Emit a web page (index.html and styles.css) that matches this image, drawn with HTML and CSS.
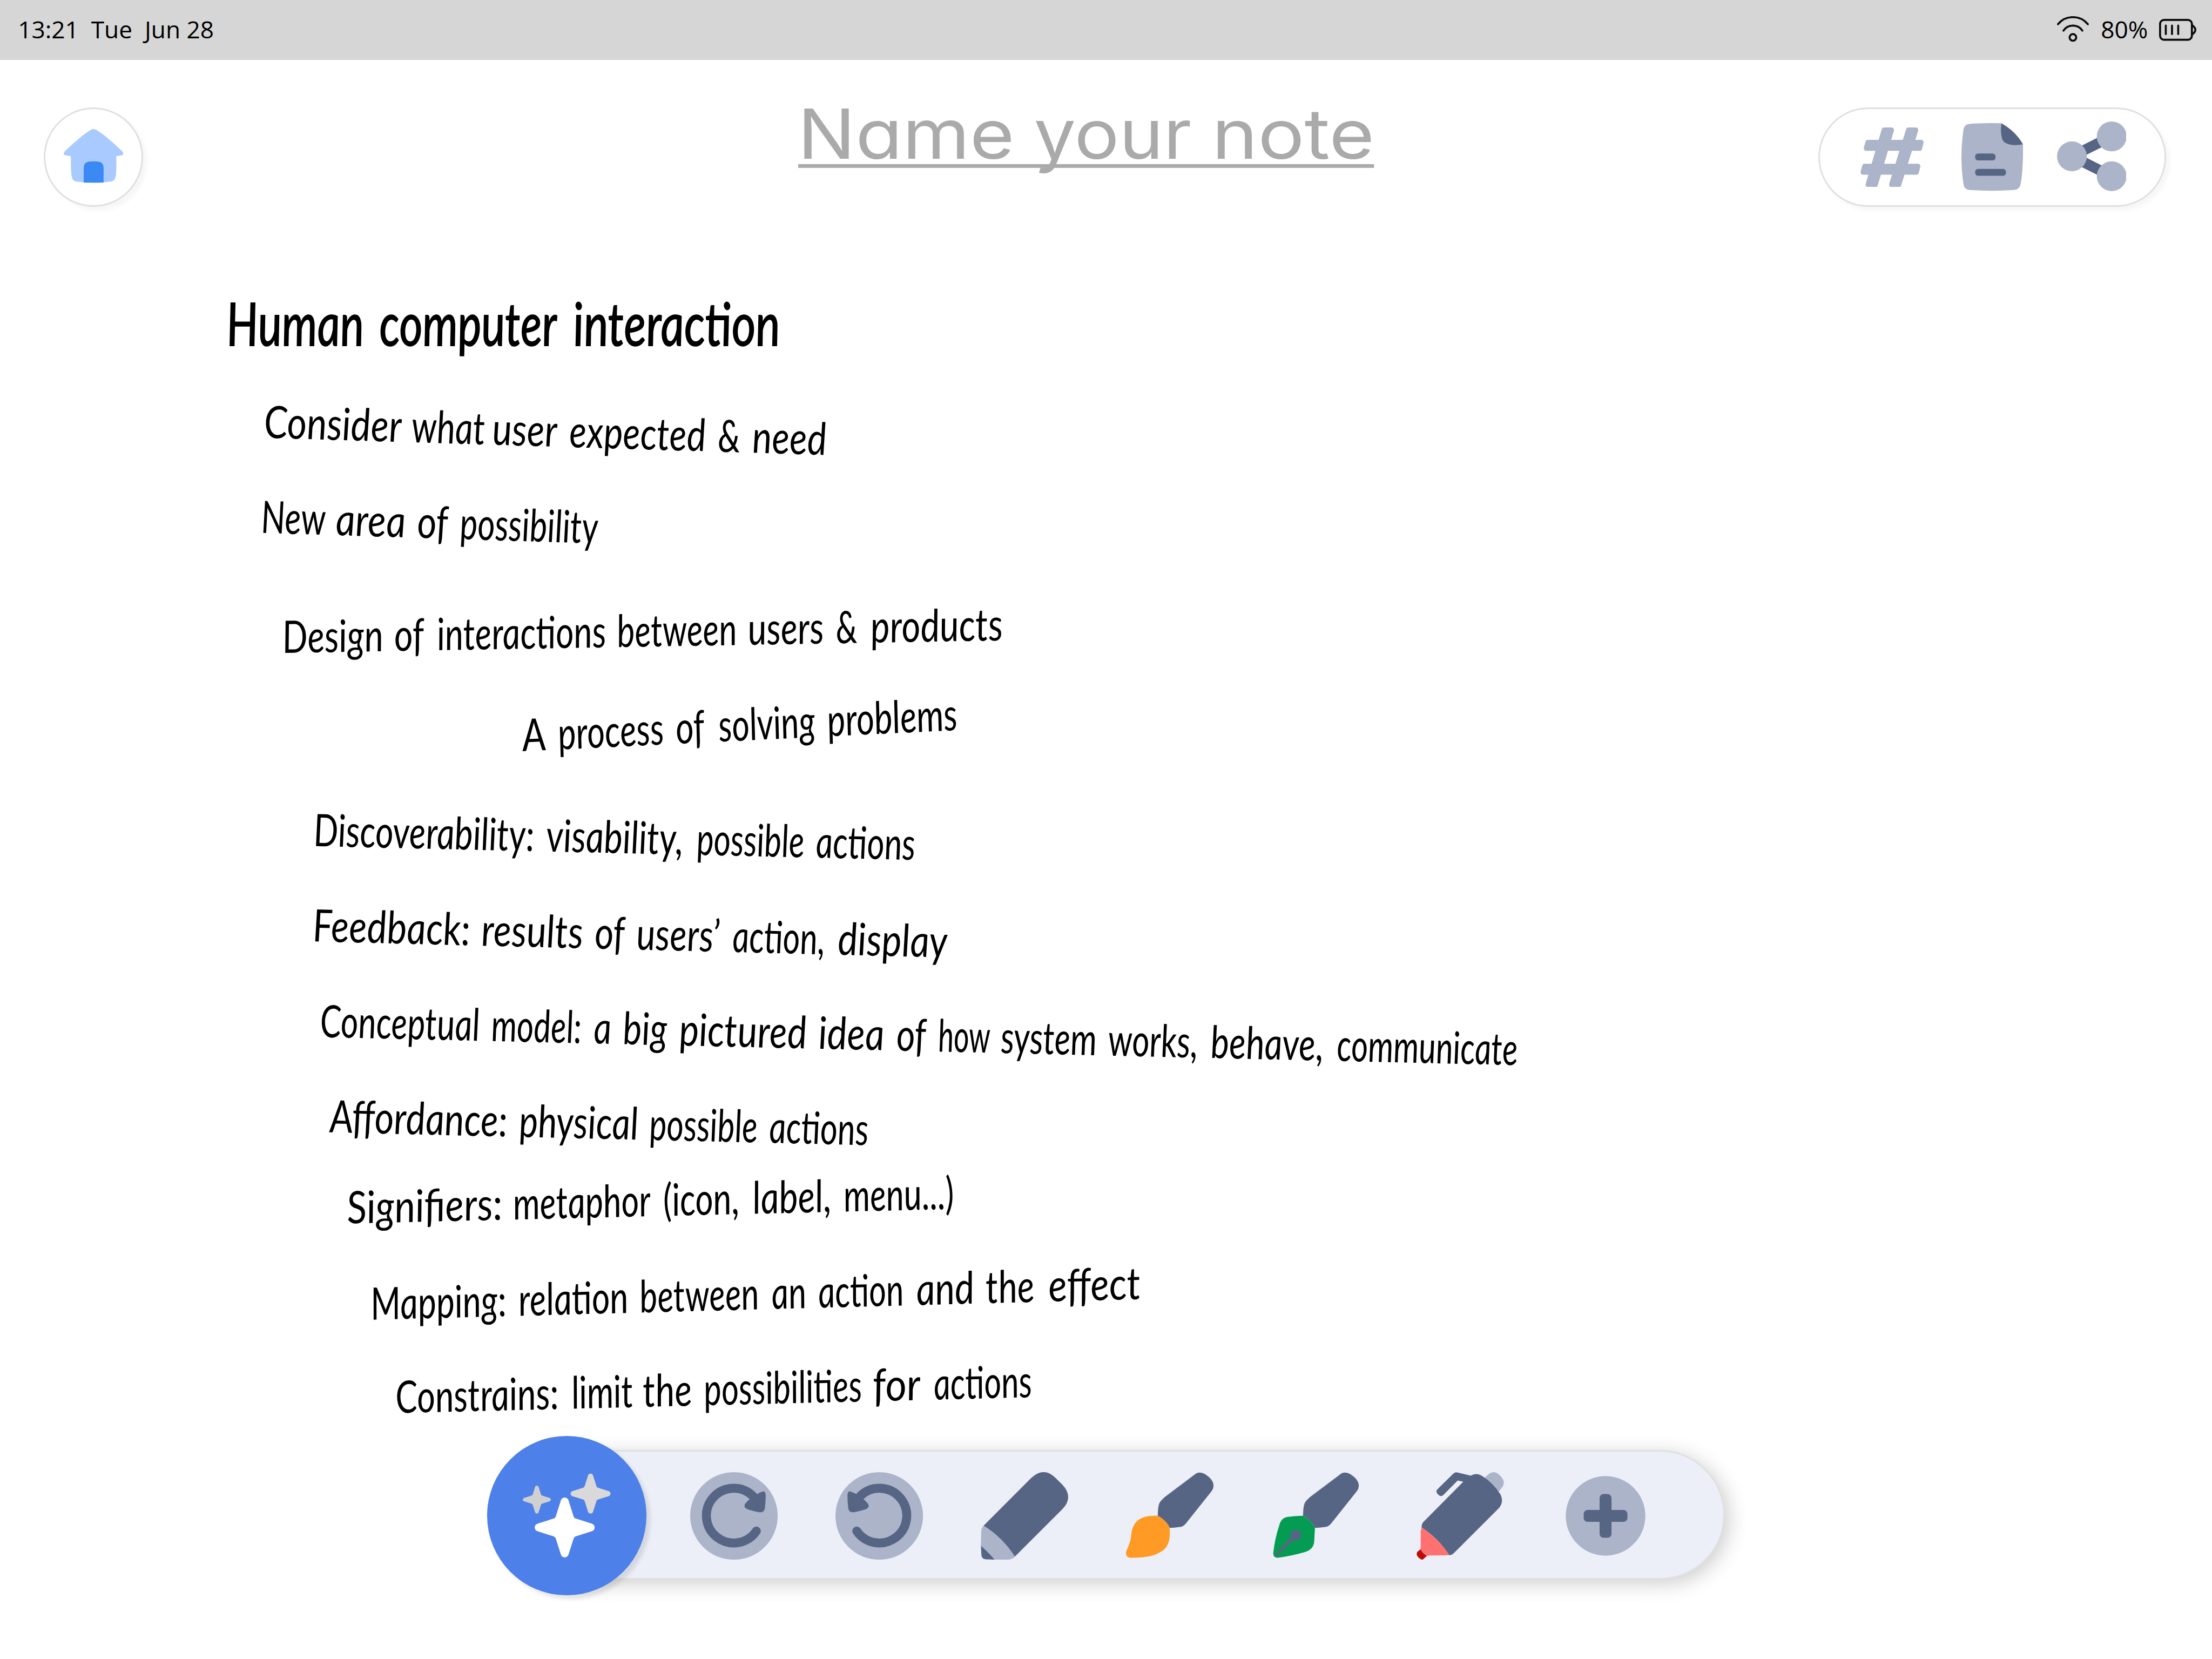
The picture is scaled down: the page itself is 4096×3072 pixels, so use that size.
FILE: index.html
```html
<!DOCTYPE html>
<html lang="en">
<head>
<meta charset="utf-8">
<title>Note</title>
<link rel="stylesheet" href="styles.css">
</head>
<body>
<div class="status">
  <span class="clock">13:21  Tue  Jun 28</span>
  <div class="indicators">
    <svg class="wifi" viewBox="0 0 64 52"><path d="M2 16A39 39 0 0 1 62 16M13 29A23 23 0 0 1 51 29"/><circle cx="32" cy="42.7" r="6.7"/></svg>
    <span class="percent">80%</span>
    <svg class="battery" viewBox="0 0 80 44"><rect x="2" y="2" width="64" height="40" rx="8"/><path d="M67 13Q79 22 67 31M13.5 13.5v17M26 13.5v17M38.5 13.5v17"/></svg>
  </div>
</div>

<header class="header">
  <button class="home" aria-label="Home">
    <svg viewBox="0 0 120 108">
      <path fill="#a8caff" d="M54 2Q60-2 66 2C84 13 101 29 117 44C122 49 120 53 115 53L105.6 54.5C106 70 106 86 104.500 95Q103 104 95 105.500Q60 110 25 105.500Q17 104 16 95C14.400 86 14.400 70 14.400 54.500L5 53C0 53-2 49 3 44C19 29 36 13 54 2Z"/>
      <path fill="#3b89f3" d="M40.200 107.400V78Q40.500 66.500 51 65.400Q60 64.600 69 65.400Q80 66.500 80.200 78V107.400Q60 108.400 40.200 107.400Z"/>
    </svg>
  </button>
  <svg class="title" viewBox="0 0 1160 160">
    <text x="-1" y="108" textLength="436" lengthAdjust="spacingAndGlyphs">Name</text>
    <text x="474" y="108" textLength="317" lengthAdjust="spacingAndGlyphs">your</text>
    <text x="832" y="108" textLength="327" lengthAdjust="spacingAndGlyphs">note</text>
    <rect x="0" y="118.300" width="1158" height="7.500"/>
  </svg>
  <div class="actions">
    <svg class="hash" viewBox="0 0 127 120"><path d="M47.700 5H62.500L30 115H15.400ZM96.700 5H111.300L77.200 115H62.600ZM15 30H122L119 42H11.700ZM8.500 78H115.500L112.500 90H5.200Z"/></svg>
    <svg class="doc" viewBox="0 0 124 136">
      <path fill="#acb4ca" d="M80.600.2Q40-.6 16 1.500Q6 3 4.500 11Q-4.500 68 4.500 125Q6 133 16 134.500Q62 137.500 106 134.500Q117 133 119 123Q124.500 95 123.800 42.700Z"/>
      <path fill="#576584" d="M80.600.2Q110 17 123.800 42.700Q104 46 94 42Q84 39 82 32Q77.500 16 80.600.2Z"/>
      <rect fill="#576584" x="27.600" y="61" width="41" height="14" rx="6"/>
      <rect fill="#576584" x="27.600" y="92" width="62" height="14" rx="6"/>
    </svg>
    <svg class="share" viewBox="0 0 140 140">
      <path fill="none" stroke="#576584" stroke-width="21" d="M110 30L30 70L110 110"/>
      <g fill="#acb4ca"><circle cx="30" cy="70" r="30"/><circle cx="110" cy="30" r="30"/><circle cx="110" cy="110" r="30"/></g>
    </svg>
  </div>
</header>

<svg class="ink" viewBox="0 412 4448 2472">
  <g class="heading">
    <text x="458" y="691" textLength="276" lengthAdjust="spacingAndGlyphs">Human</text><text x="765" y="691" textLength="358" lengthAdjust="spacingAndGlyphs">computer</text><text x="1155" y="691" textLength="416" lengthAdjust="spacingAndGlyphs">interaction</text>
  </g>
  <g transform="rotate(1.75 615 879)">
    <text x="532" y="879" textLength="277" lengthAdjust="spacingAndGlyphs">Consider</text><text x="829" y="879" textLength="148" lengthAdjust="spacingAndGlyphs">what</text><text x="991" y="879" textLength="131" lengthAdjust="spacingAndGlyphs">user</text><text x="1146" y="879" textLength="275" lengthAdjust="spacingAndGlyphs">expected</text><text x="1445" y="879" textLength="45" lengthAdjust="spacingAndGlyphs">&amp;</text><text x="1514" y="879" textLength="150" lengthAdjust="spacingAndGlyphs">need</text>
  </g>
  <g transform="rotate(1.8 600 1070)">
    <text x="526" y="1070" textLength="130" lengthAdjust="spacingAndGlyphs">New</text><text x="676" y="1070" textLength="141" lengthAdjust="spacingAndGlyphs">area</text><text x="840" y="1070" textLength="62" lengthAdjust="spacingAndGlyphs">of</text><text x="926" y="1070" textLength="278" lengthAdjust="spacingAndGlyphs">possibility</text>
  </g>
  <g transform="rotate(-1 633 1308)">
    <text x="570" y="1308" textLength="203" lengthAdjust="spacingAndGlyphs">Design</text><text x="795" y="1308" textLength="60" lengthAdjust="spacingAndGlyphs">of</text><text x="881" y="1308" textLength="340" lengthAdjust="spacingAndGlyphs">interactions</text><text x="1243" y="1308" textLength="241" lengthAdjust="spacingAndGlyphs">between</text><text x="1506" y="1308" textLength="153" lengthAdjust="spacingAndGlyphs">users</text><text x="1683" y="1308" textLength="43" lengthAdjust="spacingAndGlyphs">&amp;</text><text x="1753" y="1308" textLength="266" lengthAdjust="spacingAndGlyphs">products</text>
  </g>
  <g transform="rotate(-2.8 1212 1499)">
    <text x="1053" y="1499" textLength="48" lengthAdjust="spacingAndGlyphs">A</text><text x="1125" y="1499" textLength="213" lengthAdjust="spacingAndGlyphs">process</text><text x="1362" y="1499" textLength="58" lengthAdjust="spacingAndGlyphs">of</text><text x="1448" y="1499" textLength="195" lengthAdjust="spacingAndGlyphs">solving</text><text x="1667" y="1499" textLength="262" lengthAdjust="spacingAndGlyphs">problems</text>
  </g>
  <g transform="rotate(1.32 740 1700)">
    <text x="632" y="1700" textLength="444" lengthAdjust="spacingAndGlyphs">Discoverability:</text><text x="1100" y="1700" textLength="275" lengthAdjust="spacingAndGlyphs">visability,</text><text x="1402" y="1700" textLength="217" lengthAdjust="spacingAndGlyphs">possible</text><text x="1642" y="1700" textLength="200" lengthAdjust="spacingAndGlyphs">actions</text>
  </g>
  <g transform="rotate(1.45 700 1891)">
    <text x="630" y="1891" textLength="317" lengthAdjust="spacingAndGlyphs">Feedback:</text><text x="969" y="1891" textLength="205" lengthAdjust="spacingAndGlyphs">results</text><text x="1197" y="1891" textLength="61" lengthAdjust="spacingAndGlyphs">of</text><text x="1281" y="1891" textLength="169" lengthAdjust="spacingAndGlyphs">users’</text><text x="1474" y="1891" textLength="186" lengthAdjust="spacingAndGlyphs">action,</text><text x="1686" y="1891" textLength="221" lengthAdjust="spacingAndGlyphs">display</text>
  </g>
  <g transform="rotate(1.345 707 2083)">
    <text x="645" y="2083" textLength="321" lengthAdjust="spacingAndGlyphs">Conceptual</text><text x="989" y="2083" textLength="182" lengthAdjust="spacingAndGlyphs">model:</text><text x="1195" y="2083" textLength="36" lengthAdjust="spacingAndGlyphs">a</text><text x="1254" y="2083" textLength="89" lengthAdjust="spacingAndGlyphs">big</text><text x="1367" y="2083" textLength="257" lengthAdjust="spacingAndGlyphs">pictured</text><text x="1647" y="2083" textLength="133" lengthAdjust="spacingAndGlyphs">idea</text><text x="1804" y="2083" textLength="60" lengthAdjust="spacingAndGlyphs">of</text><text x="1888" y="2083" textLength="105" lengthAdjust="spacingAndGlyphs">how</text><text x="2014" y="2083" textLength="193" lengthAdjust="spacingAndGlyphs">system</text><text x="2230" y="2083" textLength="180" lengthAdjust="spacingAndGlyphs">works,</text><text x="2436" y="2083" textLength="227" lengthAdjust="spacingAndGlyphs">behave,</text><text x="2690" y="2083" textLength="364" lengthAdjust="spacingAndGlyphs">communicate</text>
  </g>
  <g transform="rotate(1.36 784 2276)">
    <text x="664" y="2276" textLength="358" lengthAdjust="spacingAndGlyphs">Affordance:</text><text x="1045" y="2276" textLength="240" lengthAdjust="spacingAndGlyphs">physical</text><text x="1307" y="2276" textLength="218" lengthAdjust="spacingAndGlyphs">possible</text><text x="1548" y="2276" textLength="200" lengthAdjust="spacingAndGlyphs">actions</text>
  </g>
  <g transform="rotate(-1.37 923 2451)">
    <text x="700" y="2451" textLength="313" lengthAdjust="spacingAndGlyphs">Signifiers:</text><text x="1034" y="2451" textLength="277" lengthAdjust="spacingAndGlyphs">metaphor</text><text x="1336" y="2451" textLength="153" lengthAdjust="spacingAndGlyphs">(icon,</text><text x="1516" y="2451" textLength="158" lengthAdjust="spacingAndGlyphs">label,</text><text x="1699" y="2451" textLength="222" lengthAdjust="spacingAndGlyphs">menu...)</text>
  </g>
  <g transform="rotate(-1.54 820 2648)">
    <text x="748" y="2648" textLength="273" lengthAdjust="spacingAndGlyphs">Mapping:</text><text x="1045" y="2648" textLength="221" lengthAdjust="spacingAndGlyphs">relation</text><text x="1289" y="2648" textLength="240" lengthAdjust="spacingAndGlyphs">between</text><text x="1554" y="2648" textLength="70" lengthAdjust="spacingAndGlyphs">an</text><text x="1648" y="2648" textLength="172" lengthAdjust="spacingAndGlyphs">action</text><text x="1845" y="2648" textLength="117" lengthAdjust="spacingAndGlyphs">and</text><text x="1985" y="2648" textLength="98" lengthAdjust="spacingAndGlyphs">the</text><text x="2111" y="2648" textLength="186" lengthAdjust="spacingAndGlyphs">effect</text>
  </g>
  <g transform="rotate(-1.43 860 2836)">
    <text x="798" y="2836" textLength="328" lengthAdjust="spacingAndGlyphs">Constrains:</text><text x="1152" y="2836" textLength="124" lengthAdjust="spacingAndGlyphs">limit</text><text x="1295" y="2836" textLength="99" lengthAdjust="spacingAndGlyphs">the</text><text x="1418" y="2836" textLength="318" lengthAdjust="spacingAndGlyphs">possibilities</text><text x="1758" y="2836" textLength="96" lengthAdjust="spacingAndGlyphs">for</text><text x="1880" y="2836" textLength="198" lengthAdjust="spacingAndGlyphs">actions</text>
  </g>
</svg>

<div class="dock">
  <button class="magic" aria-label="Assist">
    <svg viewBox="0 0 320 320">
      <defs><path id="spark" d="M-7.500-55C-5-62 5-62 7.500-55L18-22Q19-19 22-18L55-7.500C62-5 62 5 55 7.500L22 18Q19 19 18 22L7.500 55C5 62-5 62-7.500 55L-18 22Q-19 19-22 18L-55 7.500C-62 5-62-5-55-7.500L-22-18Q-19-19-18-22Z"/></defs>
      <use href="#spark" fill="#fff" transform="translate(156 184)"/>
      <use href="#spark" fill="#d9d9d9" transform="translate(208 116) scale(.667)"/>
      <use href="#spark" fill="#d0d0d0" transform="translate(100 128) scale(.467)"/>
    </svg>
  </button>
  <div class="tools">
    <svg viewBox="0 0 176 176">
      <g id="turn">
        <circle cx="88" cy="88" r="88" fill="#acb4ca"/>
        <path fill="none" stroke="#576584" stroke-width="18" stroke-linecap="round" d="M133 118.500A55 55 0 1 1 126 48"/>
        <path fill="#576584" d="M116.700 56.700L111 63Q106 70 114 74Q128 79 139 80.500Q149 82 150.300 72Q152 58 151.800 46Q151 36 144.500 39.500L135 43.500Z"/>
      </g>
    </svg>
    <svg viewBox="0 0 176 176"><use href="#turn" transform="translate(176 0) scale(-1 1)"/></svg>
    <svg viewBox="0 0 176 176">
      <path fill="#576584" d="M5.700 107.700L101.600 11.700Q127-12 150.600 11.700L164 25Q188 50 163.700 75L68.600 170Q43.600 131 5.700 107.700Z"/>
      <path fill="#acb4ca" d="M5.700 107.700Q43.600 131 68.600 170Q64 176 52 176H28Q13.600 159 .4 148L1 120Q1 112 5.700 107.700Z"/>
      <path fill="#576584" d="M.4 148Q13.600 159 28 176L14 175.500Q2 176 1.400 167Z"/>
    </svg>
    <svg viewBox="0 0 176 176">
      <path id="handle" fill="#576584" d="M64 87.700Q64 70 67.300 62.300Q69 58 78.800 49.500L138 5Q146-3 160 4.500Q179 17 175.500 31Q175 35 170 41L121.600 101.700Q116 110 106 110.500Q98 112 87.800 112Q82 98 64 87.700Z"/>
      <path fill="#ff9a25" d="M64 87.700Q82 98 87.800 112C90 140 83 155 66.500 162C52 171 28 172 9 172C1 172-1.500 166 1 158C6 146 9 140 10.500 127C13 100 27 86 64 87.700Z"/>
    </svg>
    <svg viewBox="0 0 176 176">
      <use href="#handle"/>
      <path fill="#049c52" d="M64 87.700Q82 98 87.800 112L86.500 138Q86 155 68.500 160.500Q40 169 13.400 172Q4 173 4 163Q7 134 16.200 106.700Q20 92 33 90Q45 88.300 64 87.700Z"/>
      <circle cx="49.300" cy="126.700" r="10.700" fill="#576584"/>
      <path fill="#576584" d="M6.900 167.300L39.500 130.700L44.800 136L9.700 170Z"/>
    </svg>
    <svg viewBox="0 0 176 176">
      <path fill="#acb4ca" d="M137 11L145 4Q155.600-4 165 4L170 9Q180 20 172 31L165 39Z"/>
      <path fill="#576584" d="M10 111Q10 105 13 101L94 19.300L82.800 16.700L54 46Q49 51 43 44.500Q37.500 39 42 34.500L74 3Q77.500-1 83 .7L109 7Q120 1 130.600 6.700Q155 22 169 45Q176 60 166 72L75 163Q71 167 65.800 167Q45 134 10 111Z"/>
      <path fill="#ff7070" d="M10 111Q45 134 65.800 167L21.200 167.700Q13 163 8.300 155L8.500 120Z"/>
      <path fill="#bf0a0a" d="M8.300 155Q13 164 21.200 168L14 174.500Q10.500 178 5 172.500Q-2.500 166 2 160Z"/>
    </svg>
    <svg viewBox="0 0 176 176">
      <circle cx="88" cy="88" r="80" fill="#acb4ca"/>
      <g fill="#576584"><rect x="76" y="44" width="24" height="88" rx="8"/><rect x="44" y="76" width="88" height="24" rx="8"/></g>
    </svg>
  </div>
</div>
</body>
</html>
```

FILE: styles.css
```css
/* 1rem is one unit of the 1112 x 834 tablet canvas */
html {
  font-size: calc(100vw / 1112);
}

* {
  box-sizing: border-box;
}

body {
  margin: 0;
  width: 1112rem;
  height: 834rem;
  overflow: hidden;
  background: #fff;
  display: flex;
  flex-direction: column;
}

button {
  border: 0;
  padding: 0;
  margin: 0;
  display: flex;
  align-items: center;
  justify-content: center;
}

svg {
  display: block;
  flex: none;
}

.status {
  height: 30rem;
  padding: 0 6.500rem 0 9rem;
  background: #d6d6d6;
  color: #000;
  font: 12rem/29.500rem "Open Sans", "Noto Sans", sans-serif;
  display: flex;
  justify-content: space-between;
}

.clock {
  white-space: pre;
}

.indicators {
  height: 29.500rem;
  display: flex;
  align-items: center;
}

.indicators svg {
  fill: none;
  stroke: #0a0a0a;
  stroke-width: 4;
  stroke-linecap: round;
}

.wifi {
  width: 16rem;
  height: 13rem;
}

.percent {
  margin: 0 5.750rem 0 6rem;
}

.battery {
  width: 20rem;
  height: 11rem;
  margin-top: .5rem;
}

.header {
  height: 74rem;
  padding: 24rem 23rem 0 22rem;
  display: flex;
  align-items: flex-start;
}

.home,
.actions {
  height: 50rem;
  background: #fff;
  border: 1rem solid #e0e0e0;
  border-radius: 25rem;
  box-shadow: 2rem 2rem 2rem rgba(0, 0, 0, 0.034);
}

.home {
  width: 50rem;
}

.home svg {
  width: 30rem;
  height: 27rem;
  margin-bottom: 1rem;
}

.title {
  width: 290rem;
  height: 40rem;
  margin: -1rem 0 0 329.250rem;
  overflow: visible;
  fill: #aaa;
  font: 138.500px Inter, sans-serif;
  font-feature-settings: "cv11";
}

.actions {
  width: 175rem;
  margin-left: auto;
  padding-left: 20.400rem;
  display: flex;
  align-items: center;
  gap: 17rem;
}

.hash {
  width: 31.750rem;
  height: 30rem;
  fill: #acb4ca;
  stroke: #acb4ca;
  stroke-width: 10;
  stroke-linejoin: round;
}

.doc {
  width: 31rem;
  height: 34rem;
  margin-left: 2rem;
}

.share {
  width: 35rem;
  height: 35rem;
  margin-bottom: 1rem;
}

.ink {
  width: 1112rem;
  height: 618rem;
  overflow: visible;
  fill: #000;
  font: italic 90px Lato, sans-serif;
}

/* straightens the italic so it reads as upright handwriting */
.ink text {
  transform-box: fill-box;
  transform-origin: 0 82%;
  transform: skewX(4deg);
}

.heading {
  font-size: 120px;
  stroke: #000;
  stroke-width: 2;
}

.dock {
  margin-left: 245rem;
  width: 622rem;
  height: 80rem;
  display: flex;
}

.magic {
  position: relative;
  flex: none;
  width: 80rem;
  height: 80rem;
  border-radius: 50%;
  background: #4d80e8;
  box-shadow: 2rem 2rem 2rem rgba(0, 0, 0, 0.1);
}

.magic svg {
  width: 80rem;
  height: 80rem;
}

.tools {
  flex: 1;
  height: 65rem;
  margin: 7rem 0 0 -63rem;
  padding-left: 84.250rem;
  display: flex;
  align-items: center;
  gap: 29rem;
  background: #eceff7;
  border: 1rem solid #e0e0e0;
  border-radius: 32.500rem;
  box-shadow: 2rem 2rem 10rem rgba(0, 0, 0, 0.2);
}

.tools svg {
  width: 44rem;
  height: 44rem;
  margin-top: 1rem;
}
```
